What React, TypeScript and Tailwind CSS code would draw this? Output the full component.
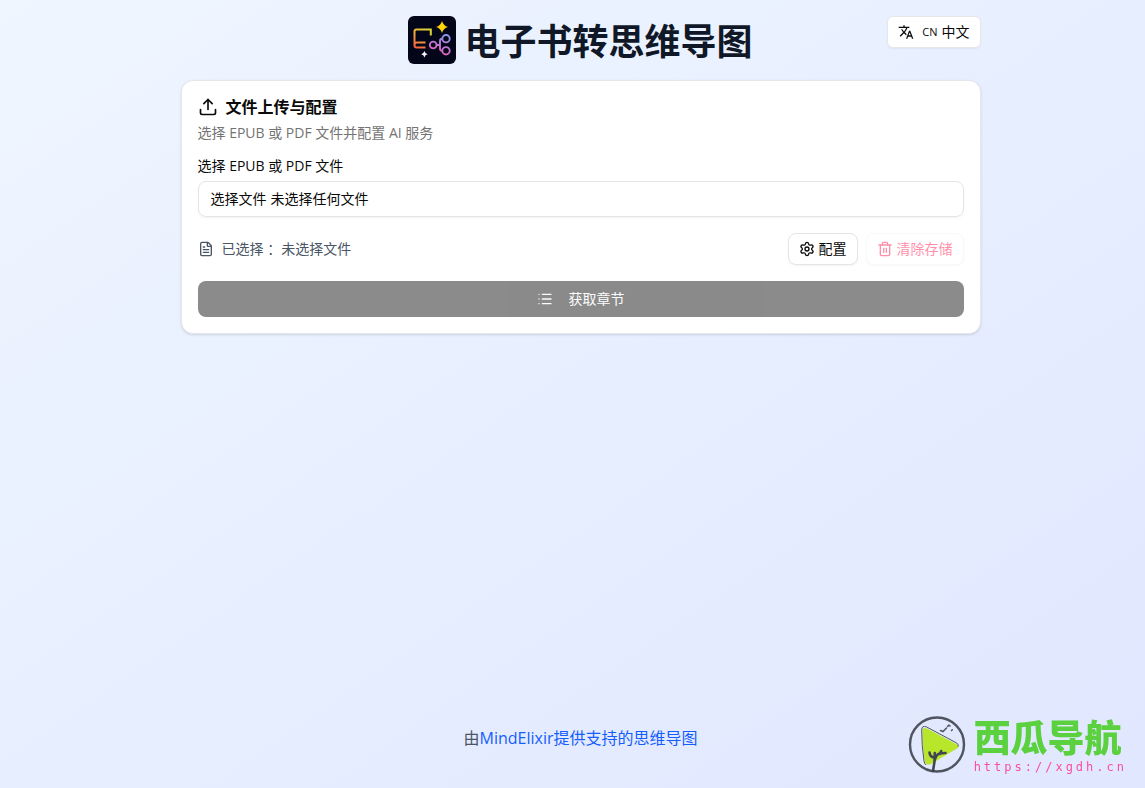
import { useState } from "react";
import { FileText, List, Settings, Trash2, Upload } from "lucide-react";
import { MdTranslate } from "react-icons/md";

function BookMapLogo() {
  return (
    <svg viewBox="0 0 48 48" className="size-12 shrink-0" fill="none" aria-hidden="true">
      <defs>
        <linearGradient id="book-stroke" x1="20" y1="12" x2="8" y2="34" gradientUnits="userSpaceOnUse">
          <stop stopColor="#d9dc35" />
          <stop offset="0.5" stopColor="#f5a13c" />
          <stop offset="1" stopColor="#f4503f" />
        </linearGradient>
        <linearGradient id="node-stroke" x1="38" y1="20" x2="30" y2="38" gradientUnits="userSpaceOnUse">
          <stop stopColor="#8c93ea" />
          <stop offset="1" stopColor="#e85cb4" />
        </linearGradient>
      </defs>
      <rect width="48" height="48" rx="6" fill="#020618" />
      <path
        d="M22.8 19.500v-6H8.500Q6.500 13.500 6.500 15.500V29.500q0 2 2 2h9M6.500 28.800q.4-2.200 2.600-2.200h8.400"
        stroke="url(#book-stroke)"
        strokeWidth="2"
      />
      <g stroke="url(#node-stroke)" strokeWidth="1.900">
        <circle cx="25.200" cy="29" r="3.400" />
        <circle cx="38" cy="22.700" r="3.700" />
        <circle cx="38" cy="34.800" r="3.700" />
        <path d="M28.600 29h3.400M34.300 22.700q-2.300 0-2.300 2.300v7.500q0 2.300 2.300 2.300" />
      </g>
      <path d="M34 5q1.300 4.700 6 6-4.700 1.300-6 6-1.300-4.700-6-6 4.700-1.300 6-6z" fill="#ffd60a" />
      <path d="M16.400 35q.6 2.600 3.200 3.200-2.600.6-3.200 3.200-.6-2.600-3.200-3.200 2.600-.6 3.200-3.200z" fill="#f4f4ff" />
    </svg>
  );
}

function SiteBadge() {
  return (
    <div className="pointer-events-none fixed right-[18px] bottom-3.5 flex items-end gap-2">
      <svg viewBox="0 0 58 58" className="size-[58px] shrink-0" fill="none" aria-hidden="true">
        <circle cx="29" cy="28.500" r="27" stroke="#50545f" strokeWidth="2.400" />
        <path
          d="M14.500 15q0-4.500 4.500-2.500l30 16q3 2 0 4L23 48q-5 2.500-6-2.500-2.500-14-2.500-30.500z"
          fill="#b7e62a"
        />
        <path
          d="M18 49q-1.500-1-2-4-2.300-15-2.300-31 0-5 5-3l30 16q2 1.500 1.500 3.500"
          stroke="#50545f"
          strokeWidth="1"
        />
        <path
          d="M25 55q2-9 1.800-18M26.500 45q1.500-6.500 5-7.500l6-.5M26 41.500q-4-.5-4.500-5M32 38l1.200-3"
          stroke="#414650"
          strokeWidth="2.600"
          strokeLinecap="round"
        />
        <path
          d="M32.500 14.500l2.500 1 3.500-3.500M39.500 10.500l1.500-1.500M43.500 14.500l.8-.8M41 9.500l1 .4"
          stroke="#50545f"
          strokeWidth="1.500"
          strokeLinecap="round"
        />
      </svg>
      <div className="flex flex-col gap-1">
        <span className="text-[37px] leading-9 font-black text-[#5bd13f]">西瓜导航</span>
        <span className="font-['DejaVu_Sans_Mono',monospace] text-xs leading-3.5 tracking-[3px] text-[#fa4f9b]">
          https://xgdh.cn
        </span>
      </div>
    </div>
  );
}

export default function App() {
  const [fileName, setFileName] = useState("");

  return (
    <div
      lang="zh-CN"
      className="flex min-h-screen flex-col bg-linear-to-br from-blue-50 to-indigo-100 pt-4 pl-4 font-['Open_Sans','Noto_Sans_CJK_SC',sans-serif] text-neutral-950"
    >
      <div className="mx-auto flex w-full max-w-[800px] grow flex-col gap-4">
        <header className="relative flex items-center justify-center gap-2">
          <BookMapLogo />
          <h1 className="pt-1 text-4xl leading-11 font-bold text-gray-900">电子书转思维导图</h1>
          <button
            type="button"
            className="absolute top-0 right-0 flex h-8 items-center gap-2 rounded-md border border-gray-200 bg-white px-2.5 text-sm shadow-xs"
          >
            <MdTranslate className="size-4" />
            <span className="flex items-center gap-1">
              <span className="text-[11px]">CN</span>
              <span>中文</span>
            </span>
          </button>
        </header>

        <main className="flex flex-col gap-4 rounded-xl border border-gray-200 bg-white p-4 shadow-sm">
          <div className="flex flex-col gap-1.5">
            <h2 className="flex items-center gap-2 text-base leading-5 font-bold">
              <Upload className="size-5" />
              文件上传与配置
            </h2>
            <p className="text-sm leading-5 text-neutral-500">选择 EPUB 或 PDF 文件并配置 AI 服务</p>
          </div>

          <div className="flex flex-col gap-2">
            <label htmlFor="book" className="text-sm leading-none">
              选择 EPUB 或 PDF 文件
            </label>
            <label
              htmlFor="book"
              className="relative flex h-9 cursor-pointer items-center gap-1 rounded-lg border border-neutral-200 px-3 text-sm shadow-xs"
            >
              <input
                id="book"
                type="file"
                accept=".epub,.pdf"
                className="sr-only"
                onChange={(e) => setFileName(e.target.files?.[0]?.name ?? "")}
              />
              <span>选择文件</span>
              <span>{fileName || "未选择任何文件"}</span>
            </label>
          </div>

          <div className="flex items-center justify-between">
            <div className="flex items-center gap-2 text-sm text-gray-600">
              <FileText className="size-4" />
              <span>已选择 ：{fileName || "未选择文件"}</span>
            </div>
            <div className="flex gap-2">
              <button
                type="button"
                className="flex h-8 items-center gap-1 rounded-lg border border-neutral-200 bg-white px-2.5 text-sm shadow-xs"
              >
                <Settings className="size-4" />
                配置
              </button>
              <button
                type="button"
                disabled
                className="flex h-8 items-center gap-1 rounded-lg border border-neutral-100 bg-white px-2.5 text-sm text-rose-500 opacity-50 shadow-xs"
              >
                <Trash2 className="size-4" />
                清除存储
              </button>
            </div>
          </div>

          <button
            type="button"
            disabled
            className="flex h-9 items-center justify-center gap-4 rounded-lg bg-neutral-900 text-sm text-neutral-50 opacity-50"
          >
            <List className="size-4" />
            获取章节
          </button>
        </main>
      </div>

      <footer className="pb-9 text-center text-base leading-7 text-gray-600">
        由
        <a href="https://mind-elixir.com" className="text-blue-600">
          MindElixir提供支持的思维导图
        </a>
      </footer>
      <SiteBadge />
    </div>
  );
}
